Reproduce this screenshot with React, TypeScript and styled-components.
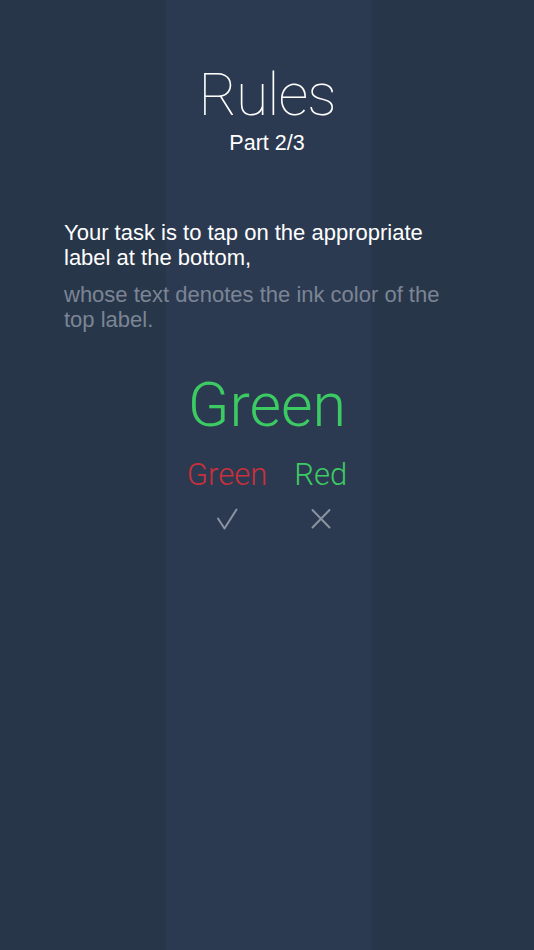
import React from "react";
import styled, { createGlobalStyle } from "styled-components";

const Global = createGlobalStyle`
  html, body { margin: 0; padding: 0; }
  body { background: #283649; }
`;

const Page = styled.div`
  min-height: 950px;
  box-sizing: border-box;
  background: linear-gradient(
    to right,
    #283649 0,
    #283649 166px,
    #2c3a51 166px,
    #2c3a51 371px,
    #283649 371px
  );
  display: flex;
  flex-direction: column;
  align-items: center;
  font-family: "Liberation Sans", Arial, sans-serif;
  color: #ffffff;
`;

const Header = styled.header`
  display: flex;
  flex-direction: column;
  align-items: center;
  padding-top: 64px;
`;

const Title = styled.h1`
  margin: 0;
  font-family: Roboto, sans-serif;
  font-weight: 100;
  font-size: 59px;
  line-height: 62px;
  letter-spacing: -1px;
  color: #ffffff;
`;

const Subtitle = styled.div`
  margin-top: 5px;
  font-size: 21.5px;
  line-height: 24px;
  color: #ffffff;
`;

const Body = styled.section`
  align-self: stretch;
  padding: 65px 64px 0;
  display: flex;
  flex-direction: column;
  gap: 12px;
`;

const Para = styled.p<{ $muted?: boolean }>`
  margin: 0;
  font-size: 22px;
  line-height: 25px;
  color: ${(p) => (p.$muted ? "#7b8595" : "#ffffff")};
`;

const Demo = styled.section`
  display: flex;
  flex-direction: column;
  align-items: center;
  margin-top: 40px;
`;

const BigWord = styled.div`
  font-family: Roboto, sans-serif;
  font-weight: 300;
  font-size: 61px;
  line-height: 66px;
  color: #3ccb63;
`;

const Choices = styled.div`
  display: grid;
  grid-template-columns: auto auto;
  column-gap: 27px;
  row-gap: 15px;
  justify-items: center;
  margin-top: 19px;
`;

const Choice = styled.div<{ $color: string }>`
  font-family: Roboto, sans-serif;
  font-weight: 300;
  font-size: 31px;
  line-height: 36px;
  color: ${(p) => p.$color};
`;

const Mark = styled.svg`
  display: block;
  width: 22px;
  height: 22px;
  stroke: #8a93a1;
  stroke-width: 2;
  fill: none;
  stroke-linecap: round;
  stroke-linejoin: round;
`;

const Check = () => (
  <Mark viewBox="0 0 22 22">
    <path d="M2 10.5 L8.5 20.5 L20.5 1.5" />
  </Mark>
);

const Cross = () => (
  <Mark viewBox="0 0 22 22">
    <path d="M2.5 2 L19.5 19.5 M19.5 2 L2.5 19.5" />
  </Mark>
);

export default function App() {
  return (
    <>
      <Global />
      <Page>
        <Header>
          <Title>Rules</Title>
          <Subtitle>Part 2/3</Subtitle>
        </Header>
        <Body>
          <Para>Your task is to tap on the appropriate label at the bottom,</Para>
          <Para $muted>whose text denotes the ink color of the top label.</Para>
        </Body>
        <Demo>
          <BigWord>Green</BigWord>
          <Choices>
            <Choice $color="#c9303b">Green</Choice>
            <Choice $color="#3ccb63">Red</Choice>
            <Check />
            <Cross />
          </Choices>
        </Demo>
      </Page>
    </>
  );
}
